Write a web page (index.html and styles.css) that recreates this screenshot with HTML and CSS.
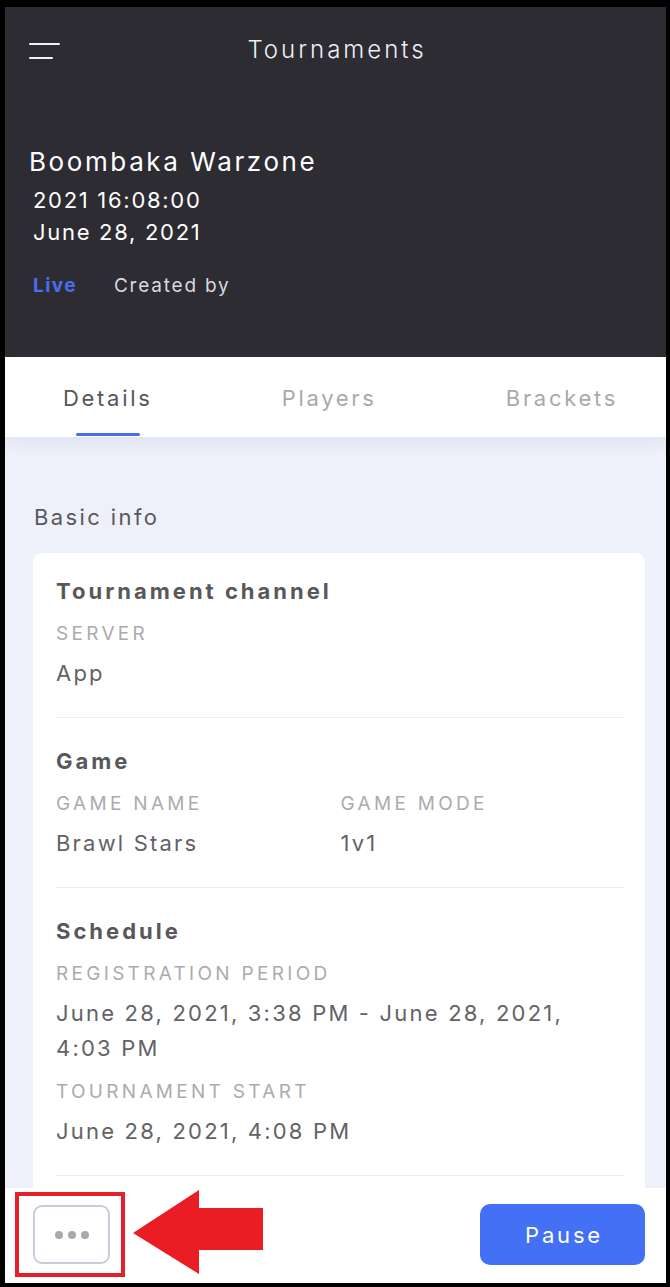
FILE: index.html
```html
<!DOCTYPE html>
<html lang="en">
<head>
<meta charset="utf-8">
<title>Tournaments</title>
<link rel="stylesheet" href="styles.css">
</head>
<body>
<div class="frame">
  <header class="hero">
    <div class="topbar">
      <button class="menu" aria-label="Menu">
        <span class="bar bar-long"></span>
        <span class="bar bar-short"></span>
      </button>
      <h1 class="page-title">Tournaments</h1>
    </div>
    <div class="event">
      <div class="event-name">Boombaka Warzone</div>
      <div class="event-date">2021 16:08:00</div>
      <div class="event-date">June 28, 2021</div>
      <div class="event-meta">
        <span class="status">Live</span>
        <span class="creator">Created by</span>
      </div>
    </div>
  </header>

  <nav class="tabs">
    <div class="tab active"><span class="tab-label">Details</span><span class="tab-line"></span></div>
    <div class="tab"><span class="tab-label">Players</span><span class="tab-line"></span></div>
    <div class="tab"><span class="tab-label">Brackets</span><span class="tab-line"></span></div>
  </nav>

  <main class="content">
    <div class="section-heading">Basic info</div>
    <div class="card">
      <section class="group">
        <div class="group-title">Tournament channel</div>
        <div class="field">
          <div class="label">SERVER</div>
          <div class="value">App</div>
        </div>
      </section>
      <section class="group">
        <div class="group-title">Game</div>
        <div class="field-grid">
          <div class="field">
            <div class="label">GAME NAME</div>
            <div class="value">Brawl Stars</div>
          </div>
          <div class="field">
            <div class="label">GAME MODE</div>
            <div class="value">1v1</div>
          </div>
        </div>
      </section>
      <section class="group">
        <div class="group-title">Schedule</div>
        <div class="field">
          <div class="label">REGISTRATION PERIOD</div>
          <div class="value">June 28, 2021, 3:38 PM - June 28, 2021,<br>4:03 PM</div>
        </div>
        <div class="field">
          <div class="label">TOURNAMENT START</div>
          <div class="value">June 28, 2021, 4:08 PM</div>
        </div>
      </section>
      <section class="group">
        <div class="group-title">Rules</div>
      </section>
    </div>
  </main>

  <footer class="actions">
    <button class="more" aria-label="More">
      <span class="dot"></span><span class="dot"></span><span class="dot"></span>
    </button>
    <button class="pause">Pause</button>
    <div class="highlight"></div>
    <svg class="arrow" width="132" height="84" viewBox="0 0 132 84" aria-hidden="true">
      <polygon points="0,43 66,0 66,18 130,18 130,60 66,60 66,84" fill="#ea1c24"/>
    </svg>
  </footer>
</div>
</body>
</html>
```

FILE: styles.css
```css
* { box-sizing: border-box; margin: 0; padding: 0; }

html, body {
  width: 670px;
  height: 1287px;
  background: #000;
  overflow: hidden;
}

body {
  font-family: Inter, "Noto Sans", "Liberation Sans", sans-serif;
}

.frame {
  width: 670px;
  height: 1287px;
  border-style: solid;
  border-color: #000;
  border-width: 7px 4px 4px 5px;
  display: flex;
  flex-direction: column;
  background: #eef1fa;
  overflow: hidden;
}

/* Header */
.hero {
  background: #2d2c33;
  height: 350px;
  flex-shrink: 0;
}

.topbar {
  height: 86px;
  position: relative;
  display: flex;
  align-items: center;
  justify-content: center;
}

.menu {
  position: absolute;
  left: 24px;
  top: 36px;
  width: 32px;
  height: 16px;
  background: none;
  border: 0;
  display: flex;
  flex-direction: column;
  justify-content: space-between;
}

.bar {
  display: block;
  height: 2px;
  background: #f2f2f2;
  border-radius: 1px;
}
.bar-long { width: 31px; }
.bar-short { width: 24px; }

.page-title {
  font-weight: 300;
  font-size: 24px;
  color: #efeff2;
  letter-spacing: 3px;
  line-height: 30px;
  padding-left: 3px;
}

.event {
  padding: 51px 0 0 24px;
  color: #fff;
}

.event-name {
  font-size: 26px;
  line-height: 36px;
  font-weight: 400;
  letter-spacing: 2.6px;
  margin-bottom: 4px;
}

.event-date {
  font-size: 22px;
  line-height: 32px;
  letter-spacing: 1.7px;
  padding-left: 4px;
}

.event-meta {
  margin-top: 23px;
  padding-left: 4px;
  display: flex;
  gap: 37px;
  font-size: 19px;
  line-height: 30px;
}

.status { color: #4b6cf0; font-weight: 700; letter-spacing: 1.4px; }
.creator { color: #d9d9de; letter-spacing: 1.8px; }

/* Tabs */
.tabs {
  background: #fff;
  height: 80px;
  flex-shrink: 0;
  display: flex;
  justify-content: space-between;
  padding: 0 48px 0 58px;
  box-shadow: 0 6px 14px rgba(120, 130, 170, 0.12);
  position: relative;
  z-index: 1;
}

.tab {
  display: flex;
  flex-direction: column;
  align-items: center;
  padding-top: 26px;
}

.tab-label {
  font-size: 22px;
  line-height: 30px;
  color: #a9a9ad;
  letter-spacing: 2.7px;
}

.tab.active .tab-label { color: #55555a; }

.tab-line {
  display: block;
  width: 64px;
  height: 3px;
  margin-top: 20px;
  border-radius: 2px;
}
.tab.active .tab-line { background: #4a6cee; }

/* Content */
.content {
  flex: 1;
  overflow: hidden;
  padding: 65px 21px 0 28px;
}

.section-heading {
  font-size: 22px;
  line-height: 30px;
  color: #58585d;
  letter-spacing: 2.4px;
  padding-left: 1px;
  margin-bottom: 21px;
}

.card {
  background: #fff;
  border-radius: 9px;
  padding: 0 20px 0 23px;
}

.group {
  padding: 26px 0 26px;
  border-bottom: 1.5px solid #ececf0;
}

.group:first-child { padding-top: 21px; }

.group-title {
  font-size: 22px;
  line-height: 34px;
  font-weight: 700;
  color: #58585c;
  letter-spacing: 3px;
}

.field-grid {
  display: grid;
  grid-template-columns: 1fr 1fr;
}

.field + .field { margin-top: 11px; }

.label {
  margin-top: 11px;
  font-size: 19px;
  line-height: 30px;
  color: #ababaf;
  letter-spacing: 3.3px;
}

.field + .field .label { margin-top: 0; }

.value {
  margin-top: 7px;
  font-size: 22px;
  line-height: 35px;
  color: #626267;
  letter-spacing: 2.2px;
}

/* Bottom actions */
.actions {
  height: 95px;
  flex-shrink: 0;
  background: #fff;
  display: flex;
  align-items: center;
  justify-content: space-between;
  padding: 0 21px 2px 28px;
  position: relative;
}

.more {
  width: 77px;
  height: 59px;
  border: 2px solid #c9cdd9;
  border-radius: 9px;
  background: #fff;
  display: flex;
  align-items: center;
  justify-content: center;
  gap: 5px;
}

.dot {
  width: 8px;
  height: 8px;
  border-radius: 50%;
  background: #a8a8ad;
}

.pause {
  width: 165px;
  height: 61px;
  border: 0;
  border-radius: 10px;
  background: #4470f6;
  color: #fff;
  font-family: Inter, "Noto Sans", sans-serif;
  font-size: 22px;
  font-weight: 400;
  letter-spacing: 2.8px;
  padding-left: 3px;
}

.highlight {
  position: absolute;
  left: 10px;
  top: 4px;
  width: 110px;
  height: 85px;
  border: 4px solid #e5202a;
}

.arrow {
  position: absolute;
  left: 128px;
  top: 2px;
}
```
